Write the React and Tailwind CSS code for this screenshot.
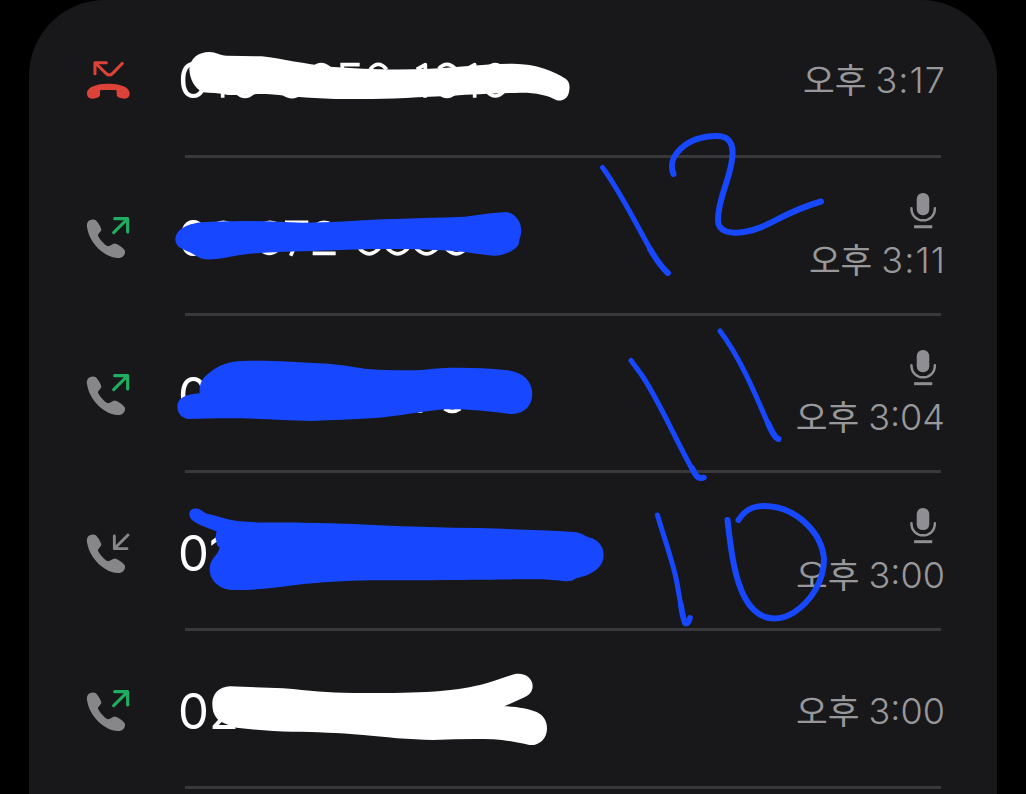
import { memo } from "react";
import clsx from "clsx";

const calls = [
  { id: 1, type: "missed", number: "0", time: "3:17", recorded: false },
  { id: 2, type: "outgoing", number: "0", time: "3:11", recorded: true },
  { id: 3, type: "outgoing", number: "0", time: "3:04", recorded: true },
  { id: 4, type: "incoming", number: "01", time: "3:00", recorded: true },
  { id: 5, type: "outgoing", number: "02", time: "3:00", recorded: false },
];

const HANDSET =
  "M95 56C84 57 79 66 81 79C86 110 105 140 135 158C150 168 165 172 178 171C190 170 196 160 195 150C193 142 175 130 167 128C158 126 152 136 144 136C134 132 120 116 114 104C113 98 124 91 124 86C124 80 112 60 106 57C102 55 98 55 95 56Z";

const CallIcon = ({ type }) => {
  if (type === "missed") {
    return (
      <svg className="mb-[3px] size-11 shrink-0" viewBox="78 78 132 132" fill="none">
        <path
          d="M187 97L158 127Q148 137 138 127L106 96M139 95H105V128"
          stroke="#dc4238"
          strokeWidth="9"
          strokeLinecap="round"
          strokeLinejoin="round"
        />
        <path
          d="M145 158C115 158 81 166 81 187C81 198 87 203 96 203C106 203 120 199 120 192V182C120 178 122 177 127 177H163C168 177 170 178 170 182V192C170 199 184 203 194 203C203 203 209 198 209 187C209 166 175 158 145 158Z"
          fill="#dc4238"
        />
      </svg>
    );
  }

  return (
    <svg className="mb-[3px] size-11 shrink-0" viewBox="78 42 132 132" fill="none">
      <path d={HANDSET} fill="#878789" />
      {type === "outgoing" ? (
        <path
          d="M161 95L202 54M164 53H203V93"
          stroke="#1fad5f"
          strokeWidth="9.5"
          strokeLinecap="round"
          strokeLinejoin="round"
        />
      ) : (
        <path
          d="M204 57L165 96M163 60V98H201"
          stroke="#878789"
          strokeWidth="8.5"
          strokeLinecap="round"
          strokeLinejoin="round"
        />
      )}
    </svg>
  );
};

const MicIcon = () => (
  <svg className="mr-2 h-[37px] w-7" viewBox="388 38 84 112" fill="none">
    <rect x="411" y="41" width="38" height="67" rx="18" fill="#8f8f93" />
    <path
      d="M395 87C395 136 466 136 466 87"
      stroke="#8f8f93"
      strokeWidth="7.5"
      strokeLinecap="round"
    />
    <path d="M403 143H458" stroke="#8f8f93" strokeWidth="9" />
  </svg>
);

const CallRow = ({ call }) => (
  <li className="flex h-[157.8px] flex-col">
    <div className="flex flex-1 items-center pt-1.5 pr-[52px] pl-[57px]">
      <CallIcon type={call.type} />
      <span className="ml-[48px] flex-1 text-[49px] leading-none text-white">
        {call.number}
      </span>
      <div className="flex flex-col items-end gap-[7px]">
        {call.recorded && <MicIcon />}
        <div className="flex items-baseline gap-[9px] leading-[48px] whitespace-nowrap text-[#98989b]">
          <span className="text-[34.5px]">오후</span>
          <span
            className={clsx(
              "text-[36px] font-light",
              call.time.includes("1") && "-mr-px tracking-[0.03em]"
            )}
          >
            {call.time}
          </span>
        </div>
      </div>
    </div>
    <div className="mr-[56px] ml-[156px] h-[3px] bg-[#39393b]" />
  </li>
);

// Marker strokes drawn over the list
const Markup = () => (
  <svg
    className="pointer-events-none absolute inset-0"
    width="1026"
    height="794"
    viewBox="0 0 1026 794"
    fill="none"
    strokeLinecap="round"
    strokeLinejoin="round"
  >
    {/* Edges left showing around the cover strokes */}
    <g stroke="#fff" strokeWidth="11" strokeLinecap="butt">
      <g transform="translate(170 40) scale(.33333)">
        <path d="M430 84Q453 64 478 84M511 74H569M517 70V86M600 88Q625 58 650 88M740 88L766 74V90M806 86Q831 60 856 86M895 84L914 74V86M951 86Q976 62 1000 86" />
        <path d="M158 150V173M200 158Q225 180 250 158M340 160Q366 180 392 160M765 158V173M806 158Q831 180 856 158M914 152V173M950 154Q976 182 1002 154" />
      </g>
      <g transform="translate(170 200) scale(.33333)">
        <path d="M134 74Q160 60 186 74M275 74Q300 60 325 74M345 67H415M440 74Q462 60 486 74" />
        <path d="M274 150Q298 170 322 150M372 145L362 167M428 160H497M568 145Q597 178 628 145M652 145Q683 178 714 145M738 145Q770 178 802 145M828 145Q858 178 890 145" />
      </g>
      <g transform="translate(165 350) scale(.33333)">
        <path d="M758 183H772M838 176Q862 192 886 176" />
      </g>
    </g>

    <g fill="#fff">
      <path
        transform="translate(170 40) scale(.33333)"
        d="M58 88C60 55 85 36 118 36C140 36 148 47 170 47L275 49C340 57 400 72 480 80C570 87 680 91 780 86C860 82 940 72 1030 71C1100 72 1150 92 1188 117C1200 127 1200 142 1197 156C1193 175 1180 184 1160 181C1135 165 1090 157 1050 158C990 160 900 163 850 167C750 171 640 178 560 177C450 179 380 170 300 163C250 160 220 167 175 165C145 159 120 159 100 157C72 145 60 118 58 88Z"
      />
      <path
        transform="translate(170 660) scale(.33333)"
        d="M127 132C127 100 148 80 180 79L340 85C420 92 470 99 550 99C640 99 710 99 770 96C840 92 890 84 930 75C970 65 1005 51 1035 42C1065 37 1088 55 1088 78C1088 92 1080 104 1065 111L1003 139C1040 139 1075 146 1100 156C1122 166 1131 185 1131 206C1131 238 1105 258 1078 255C1045 248 1010 240 970 238C910 235 850 238 790 240C720 239 640 231 580 225C500 218 440 216 370 215C310 215 250 209 200 203C170 194 147 186 138 172C130 160 127 148 127 132Z"
      />
    </g>

    <g fill="#1748ff">
      <path
        transform="translate(170 200) scale(.33333)"
        d="M16 118C16 95 38 78 70 71C100 64 140 65 190 64C260 61 330 66 400 68C480 68 560 62 640 58C720 55 800 53 885 50C930 44 970 38 1010 36C1035 40 1054 65 1054 92C1054 106 1048 114 1047 128C1045 145 1010 166 975 167C940 166 900 157 860 154C800 148 700 146 600 147C500 150 420 154 340 155C270 158 220 162 180 170C150 176 130 179 105 178C85 176 75 163 58 156C32 147 16 138 16 118Z"
      />
      <path
        transform="translate(165 350) scale(.33333)"
        d="M37 168C38 145 62 132 104 130C103 112 105 97 118 82C140 60 165 42 205 35C260 28 380 34 490 41C550 46 580 56 640 59C700 61 740 62 780 59C850 50 940 53 1020 60C1075 64 1102 95 1102 132C1102 172 1070 197 1030 191C980 184 900 175 840 178C780 182 700 200 620 205C560 209 500 210 440 213C340 210 240 203 160 205L68 207C48 203 37 188 37 168Z"
      />
      <path
        transform="translate(170 500) scale(.33333)"
        d="M58 43C58 28 70 23 84 26C95 30 100 37 115 42C150 50 175 60 210 64C260 69 320 67 400 68C500 69 600 74 700 79C800 83 900 84 1000 86C1070 91 1140 90 1215 96C1235 99 1245 107 1256 112C1285 118 1301 140 1301 166C1301 205 1260 228 1218 235C1210 242 1203 244 1185 244C1150 239 1120 238 1060 238C900 240 700 241 600 241C500 243 440 248 370 256C310 265 240 272 185 270C145 267 119 240 119 207C119 175 145 167 149 142C142 138 138 132 140 124C133 116 140 103 139 94C115 85 90 76 74 66C64 60 58 53 58 43Z"
      />
    </g>

    <g stroke="#1748ff" strokeWidth="6">
      {/* 12 */}
      <path strokeWidth="5" d="M602.5 167.5C611 179 621 196 631 214C641 232 650 250 658 262L667 273" />
      <path strokeWidth="5.8" d="M650 249Q660 266 668 273" />
      <path d="M673.5 174C666 157 686 136 717 136C730 136 733 145 732.5 154C732 177 718 196 718 220C718 232 730 234 744 232C770 228 778 214 821 201.5" />
      {/* 11 */}
      <path strokeWidth="5" d="M631 360.5L641 374C657 397 673 434 691 467C695 475 698 480 704 477.5" />
      <path strokeWidth="6" d="M692 468C696 476 698 479.500 703.500 477.500" />
      <path strokeWidth="5" d="M720 331C739 356 754 391 766 419C770 428 774 438 778.5 439.5" />
      <path strokeWidth="6" d="M768 423C772 432 775 438 778.5 439" />
      {/* 10 */}
      <path strokeWidth="5" d="M657.5 515C664 538 673 562 677 583C680 600 682 614 684.5 622" />
      <path strokeWidth="5.8" d="M681 605C682 613 683.500 619 685 623Q688 625 690 618" />
      <path d="M727.5 520C731 552 735 580 745 598C757 620 776 623 793 613C812 601 824 580 824 559C822 533 796 506 764 506C751 506 744 511 738.5 520" />
    </g>
  </svg>
);

const App = () => {
  return (
    <main className="relative h-[794px] w-[1026px] overflow-hidden bg-black px-[29px] font-['Inter','Noto_Sans_CJK_KR',sans-serif]">
      <ul className="h-full overflow-hidden rounded-t-[76px] bg-[#18181a]">
        {calls.map((call) => (
          <CallRow key={call.id} call={call} />
        ))}
      </ul>
      <Markup />
    </main>
  );
};

export default memo(App);
